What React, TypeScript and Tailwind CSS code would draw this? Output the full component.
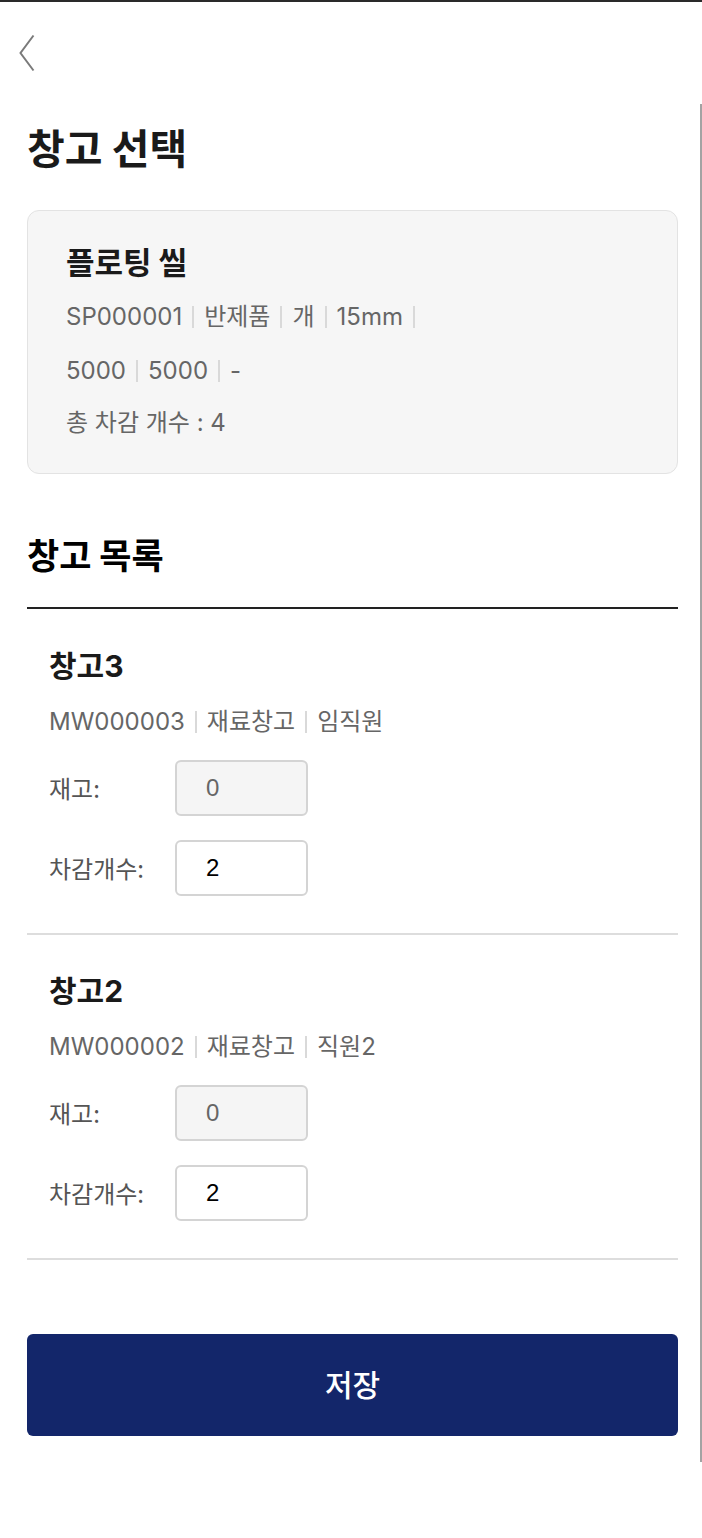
import React from "react";

const KR = { fontFamily: '"Noto Sans CJK KR", "Noto Sans", sans-serif' };
const MIX = { fontFamily: 'Inter, "Noto Sans CJK KR", sans-serif' };
const ARIAL = { fontFamily: '"Liberation Sans", "Noto Sans CJK KR", sans-serif' };

function Sep() {
  return <span className="mx-[10px] inline-block h-[22px] w-[2px] bg-[#d9d9d9] align-middle" />;
}

function Meta({ parts, size }: { parts: string[]; size: string }) {
  return (
    <div className={`flex items-center leading-[36px] text-[#666666] ${size}`} style={MIX}>
      {parts.map((p, i) => (
        <React.Fragment key={i}>
          {i > 0 && <Sep />}
          <span>{p}</span>
        </React.Fragment>
      ))}
    </div>
  );
}

function Warehouse({ name, parts, stock, count }: { name: string; parts: string[]; stock: string; count: string }) {
  return (
    <div className="px-[22px] pb-[37px]">
      <div className="text-[30px] font-bold leading-[36px] text-[#1a1a1a]" style={MIX}>{name}</div>
      <div className="mt-[20px]">
        <Meta parts={parts} size="text-[24px]" />
      </div>
      <div className="mt-[20px] flex items-center">
        <div className="w-[126px] text-[24px] text-[#555555]" style={KR}>재고:</div>
        <div className="flex h-[56px] w-[133px] items-center rounded-[6px] border-2 border-[#d4d4d4] bg-[#f5f5f5] pl-[29px] text-[24px] text-[#666666]" style={ARIAL}>
          {stock}
        </div>
      </div>
      <div className="mt-[24px] flex items-center">
        <div className="w-[126px] text-[24px] text-[#555555]" style={KR}>차감개수:</div>
        <div className="flex h-[56px] w-[133px] items-center rounded-[6px] border-2 border-[#d4d4d4] bg-white pl-[29px] text-[24px] text-black" style={ARIAL}>
          {count}
        </div>
      </div>
    </div>
  );
}

export default function App() {
  return (
    <div className="w-[702px] min-h-[1538px] bg-white" style={KR}>
      <div className="h-[2px] bg-[#2a2a2a]" />
      <div className="h-[102px] pl-[19px] pt-[32px]">
        <svg width="16" height="38" viewBox="0 0 16 38" fill="none">
          <polyline points="14.5,1.5 1.5,19 14.5,36.5" stroke="#7a7a7a" strokeWidth="2" strokeLinejoin="miter" />
        </svg>
      </div>
      <div className="border-r-2 border-[#a3a3a3] pb-[26px]">
        <div className="pl-[27px] pr-[22px]">
          <div className="flex h-[86px] items-center text-[41px] font-bold text-[#1a1a1a]">창고 선택</div>
          <div className="mt-[20px] rounded-[12px] border border-[#e3e3e3] bg-[#f6f6f6] px-[38px] pt-[32px] pb-[32px]">
            <div className="text-[31px] font-bold leading-[36px] text-[#1a1a1a]">플로팅 씰</div>
            <div className="mt-[20px]">
              <Meta parts={["SP000001", "반제품", "개", "15mm", ""]} size="text-[24px]" />
            </div>
            <div className="mt-[18px]">
              <Meta parts={["5000", "5000", "-"]} size="text-[24px]" />
            </div>
            <div className="mt-[16px] text-[24px] leading-[36px] text-[#666666]" style={MIX}>총 차감 개수 : 4</div>
          </div>
          <div className="mt-[56px] text-[35px] font-bold leading-[48px] text-black">창고 목록</div>
          <div className="mt-[29px] h-[2px] bg-[#222222]" />
          <div className="pt-[39px]">
            <Warehouse name="창고3" parts={["MW000003", "재료창고", "임직원"]} stock="0" count="2" />
          </div>
          <div className="h-[2px] bg-[#dddddd]" />
          <div className="pt-[38px]">
            <Warehouse name="창고2" parts={["MW000002", "재료창고", "직원2"]} stock="0" count="2" />
          </div>
          <div className="h-[2px] bg-[#dddddd]" />
          <button className="mt-[74px] flex h-[102px] w-full items-center justify-center rounded-[6px] bg-[#13266a] pb-[3px] text-[30px] font-medium text-white" style={KR}>
            저장
          </button>
        </div>
      </div>
    </div>
  );
}
